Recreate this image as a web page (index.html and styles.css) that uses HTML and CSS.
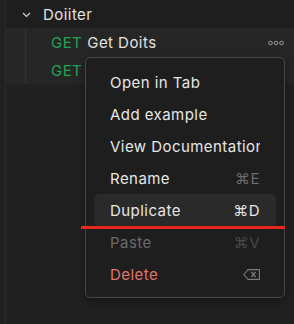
FILE: index.html
```html
<!DOCTYPE html>
<html lang="en">
<head>
    <meta charset="UTF-8">
    <title>Collection Tree</title>
    <link rel="stylesheet" href="styles.css">
</head>
<body>
    <div class="sidebar">
        <!-- Folder row -->
        <div class="folder-row">
            <svg class="chevron" width="9" height="6" viewBox="0 0 9 6">
                <path d="M1 1 L4.5 4.5 L8 1" fill="none" stroke="#cfcfcf" stroke-width="1.2"/>
            </svg>
            <span class="folder-name">Doiiter</span>
        </div>

        <div class="children">
            <div class="request-row">
                <span class="method">GET</span>
                <span class="request-name">Get Doits</span>
                <svg class="more" width="16" height="6" viewBox="0 0 16 6">
                    <circle cx="2.5" cy="3" r="1.8" fill="none" stroke="#9a9a9a" stroke-width="1"/>
                    <circle cx="8" cy="3" r="1.8" fill="none" stroke="#9a9a9a" stroke-width="1"/>
                    <circle cx="13.5" cy="3" r="1.8" fill="none" stroke="#9a9a9a" stroke-width="1"/>
                </svg>
            </div>
            <div class="request-row">
                <span class="method">GET</span>
            </div>
        </div>
    </div>

    <!-- Context menu -->
    <div class="context-menu">
        <div class="menu-item"><span class="label">Open in Tab</span></div>
        <div class="menu-item"><span class="label">Add example</span></div>
        <div class="menu-item"><span class="label">View Documentation</span></div>
        <div class="menu-item"><span class="label">Rename</span><span class="shortcut">⌘E</span></div>
        <div class="menu-item active"><span class="label">Duplicate</span><span class="shortcut">⌘D</span></div>
        <div class="menu-item disabled"><span class="label">Paste</span><span class="shortcut">⌘V</span></div>
        <div class="menu-item danger">
            <span class="label">Delete</span>
            <svg class="shortcut-icon" width="17" height="11" viewBox="0 0 17 11">
                <path d="M5 0.6 H16.4 V10.4 H5 L0.8 5.5 Z" fill="none" stroke="#7a7a7a" stroke-width="1.1" stroke-linejoin="round"/>
                <path d="M8.5 3 L12.5 8 M12.5 3 L8.5 8" stroke="#7a7a7a" stroke-width="1.3"/>
            </svg>
        </div>
    </div>

    <div class="marker"></div>
</body>
</html>
```

FILE: styles.css
```css
* {
    margin: 0;
    padding: 0;
    box-sizing: border-box;
}

body {
    width: 294px;
    height: 324px;
    overflow: hidden;
    background: #212121;
    font-family: 'Inter', 'DejaVu Sans', sans-serif;
    font-size: 15px;
    letter-spacing: 0.45px;
    color: #e4e4e4;
    position: relative;
}

/* Tree */
.sidebar {
    margin-left: 5px;
    height: 100%;
    border-left: 1px solid #2a2a2a;
}

.folder-row {
    height: 28px;
    display: flex;
    align-items: center;
    padding-left: 16px;
    background: #1e1e1e;
}

.chevron {
    margin-right: 12px;
    margin-top: 1px;
}

.folder-name {
    color: #e2e2e2;
}

.children {
    background: #262626;
    margin-left: 19px;
    border-left: 1px solid #333333;
    position: relative;
}

.children::before {
    content: "";
    position: absolute;
    top: 0;
    bottom: 0;
    left: -20px;
    width: 19px;
    background: #262626;
}

.request-row {
    height: 28px;
    display: flex;
    align-items: center;
    padding-left: 25px;
    padding-right: 10px;
}

.method {
    color: #22a453;
    margin-right: 5px;
}

.request-name {
    flex: 1;
    color: #e2e2e2;
}

.more {
    margin-top: 1px;
}

/* Context menu */
.context-menu {
    position: absolute;
    left: 85px;
    top: 57px;
    width: 200px;
    height: 241px;
    background: #1e1e1e;
    border: 1px solid #474747;
    border-radius: 5px;
    padding: 8px 8px;
    box-shadow: 0 4px 12px rgba(0, 0, 0, 0.35);
}

.menu-item {
    height: 32px;
    display: flex;
    align-items: center;
    padding: 0 16px;
    border-radius: 5px;
    color: #e6e6e6;
}

.menu-item .label {
    flex: 1;
    white-space: nowrap;
    overflow: hidden;
}

.menu-item .shortcut {
    color: #6c6c6c;
    margin-left: 8px;
}

.menu-item.active {
    background: #2a2a2a;
}

.menu-item.active .shortcut {
    color: #e6e6e6;
}

.menu-item.disabled .label {
    color: #6a6a6a;
}

.menu-item.disabled .shortcut {
    color: #484848;
}

.menu-item.danger .label {
    color: #e2756b;
}

.shortcut-icon {
    margin-left: 8px;
}

/* Annotation line */
.marker {
    position: absolute;
    left: 81px;
    top: 226px;
    width: 204px;
    height: 3px;
    background: #e8261c;
}
```
